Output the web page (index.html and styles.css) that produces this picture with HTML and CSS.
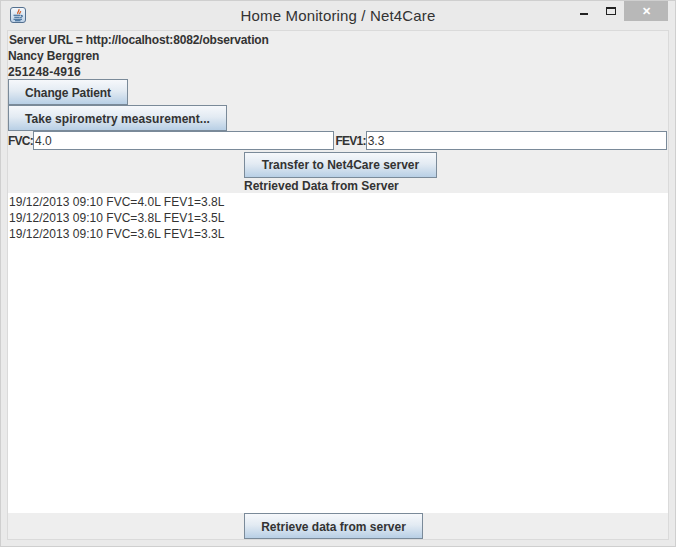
FILE: index.html
```html
<!DOCTYPE html>
<html lang="en">
<head>
    <meta charset="UTF-8">
    <title>Home Monitoring / Net4Care</title>
    <link rel="stylesheet" href="styles.css">
</head>
<body>
    <div class="window">
        <!-- Title bar -->
        <div class="titleBar">
            <div class="titleLeft">
                <svg class="javaIcon" width="16" height="16" viewBox="0 0 16 16">
                    <defs>
                        <linearGradient id="iconBack" x1="0" y1="0" x2="0" y2="1">
                            <stop offset="0" stop-color="#f6f9fc"/>
                            <stop offset="1" stop-color="#bcd0e6"/>
                        </linearGradient>
                    </defs>
                    <rect x="0.5" y="0.5" width="15" height="15" rx="2.5" fill="url(#iconBack)" stroke="#54708f"/>
                    <path d="M8.800 2.200c1.400 1.600-2.200 2.600-.9 4.800M10.600 4.200c.3 1.100-1.500 1.500-.8 2.900" fill="none" stroke="#d0561f" stroke-width="1.200"/>
                    <path d="M3.500 8.200h7M11 8.300c2 0 1.500 2-.8 2.200M4.300 10.200h5.400M3.500 12.200h8.500M5 13.700h5.500" fill="none" stroke="#2f5f8f" stroke-width="1.100"/>
                </svg>
            </div>
            <div class="windowTitle">Home Monitoring / Net4Care</div>
            <div class="windowControls">
                <div class="minButton"><span class="minGlyph"></span></div>
                <div class="maxButton"><span class="maxGlyph"></span></div>
                <div class="closeButton">✕</div>
            </div>
        </div>

        <div class="content">
            <div class="infoLines">
                <div class="boldLine urlLine">Server URL = http://localhost:8082/observation</div>
                <div class="boldLine nameLine">Nancy Berggren</div>
                <div class="boldLine idLine">251248-4916</div>
            </div>
            <button class="javaButton lowText changeButton">Change Patient</button>
            <button class="javaButton lowText takeButton">Take spirometry measurement...</button>

            <div class="fieldRow">
                <label class="fieldLabel">FVC:</label>
                <input class="fieldInput" type="text" value="4.0">
                <label class="fieldLabel">FEV1:</label>
                <input class="fieldInput" type="text" value="3.3">
            </div>

            <div class="centerColumn">
                <button class="javaButton transferButton">Transfer to Net4Care server</button>
                <div class="retrievedLabel">Retrieved Data from Server</div>
            </div>

            <div class="dataArea">
                <div>19/12/2013 09:10 FVC=4.0L FEV1=3.8L</div>
                <div>19/12/2013 09:10 FVC=3.8L FEV1=3.5L</div>
                <div>19/12/2013 09:10 FVC=3.6L FEV1=3.3L</div>
            </div>

            <div class="bottomBar">
                <button class="javaButton lowText retrieveButton">Retrieve data from server</button>
            </div>
        </div>
    </div>
</body>
</html>
```

FILE: styles.css
```css
html, body {
    margin: 0;
    padding: 0;
}

body {
    width: 676px;
    height: 547px;
    overflow: hidden;
    font-family: "Liberation Sans", Arial, sans-serif;
}

.window {
    width: 676px;
    height: 547px;
    box-sizing: border-box;
    background-color: #eaeaea;
    border: 1px solid #cfcfcf;
    display: flex;
    flex-direction: column;
}

.titleBar {
    height: 29px;
    flex: none;
    display: grid;
    grid-template-columns: 1fr auto 1fr;
    align-items: start;
}

.titleLeft {
    padding: 6px 0 0 9px;
}

.javaIcon {
    display: block;
}

.windowTitle {
    margin-top: 6px;
    font-size: 15px;
    line-height: 18px;
    color: #333;
    letter-spacing: 0.15px;
}

.windowControls {
    justify-self: end;
    display: flex;
    margin-right: 7px;
}

.minButton,
.maxButton {
    width: 29px;
    height: 20px;
}

.minGlyph {
    display: block;
    margin: 12px 0 0 14px;
    width: 8px;
    height: 2px;
    background-color: #222;
}

.maxGlyph {
    display: block;
    margin: 6px 0 0 11px;
    width: 8px;
    height: 5px;
    border: 1px solid #222;
    border-top-width: 2px;
}

.closeButton {
    width: 44px;
    height: 20px;
    background-color: #b8b8b8;
    color: #fff;
    font-size: 11px;
    line-height: 20px;
    text-align: center;
    font-weight: bold;
}

.content {
    margin-left: 6px;
    width: 662px;
    height: 510px;
    box-sizing: border-box;
    background-color: #eeeeee;
    border: 1px solid #dadada;
    display: flex;
    flex-direction: column;
    align-items: flex-start;
}

.infoLines {
    height: 48px;
    flex: none;
    padding-top: 1px;
    box-sizing: border-box;
}

.boldLine {
    font-size: 12px;
    font-weight: bold;
    line-height: 16px;
    color: #333;
    padding-left: 1px;
}

.boldLine.idLine {
    padding-left: 0;
    letter-spacing: 0.2px;
    height: 15px;
}

.urlLine {
    letter-spacing: -0.155px;
}

.boldLine.nameLine {
    padding-left: 0;
    letter-spacing: -0.1px;
}

.javaButton {
    display: block;
    flex: none;
    height: 26px;
    box-sizing: border-box;
    padding: 0;
    border: 1px solid #7a8a99;
    background: linear-gradient(to bottom, #f6f8fb 0%, #e3ebf3 45%, #b8cfe5 100%);
    font-family: "Liberation Sans", Arial, sans-serif;
    font-size: 12px;
    font-weight: bold;
    color: #333;
}

.lowText {
    padding-top: 2px;
}

.changeButton {
    width: 120px;
    letter-spacing: -0.1px;
}

.takeButton {
    width: 219px;
    letter-spacing: 0.06px;
}

.fieldRow {
    display: flex;
    flex: none;
    align-items: center;
    width: 659px;
    height: 19px;
    margin-bottom: 2px;
}

.fieldLabel {
    font-size: 12px;
    font-weight: bold;
    color: #333;
    letter-spacing: -0.75px;
}

.fieldInput {
    flex: 1;
    width: 0;
    height: 19px;
    box-sizing: border-box;
    margin: 0;
    padding: 0 1px;
    border: 1px solid #7a8a99;
    background-color: #fff;
    font-family: "Liberation Sans", Arial, sans-serif;
    font-size: 12px;
    color: #333;
    outline: none;
}

.fieldInput + .fieldLabel {
    margin-left: 1px;
}

.centerColumn {
    flex: none;
    margin-left: 236px;
}

.transferButton {
    width: 193px;
}

.retrievedLabel {
    font-size: 12px;
    font-weight: bold;
    line-height: 14px;
    padding-top: 1px;
    color: #333;
}

.dataArea {
    width: 660px;
    height: 320px;
    flex: none;
    box-sizing: border-box;
    background-color: #fff;
    padding: 1px 0 0 1px;
    font-size: 12px;
    line-height: 16px;
    letter-spacing: 0.03px;
    color: #333;
}

.bottomBar {
    width: 660px;
    flex: none;
    display: flex;
    padding-left: 236px;
    box-sizing: border-box;
}

.retrieveButton {
    width: 179px;
}
```
